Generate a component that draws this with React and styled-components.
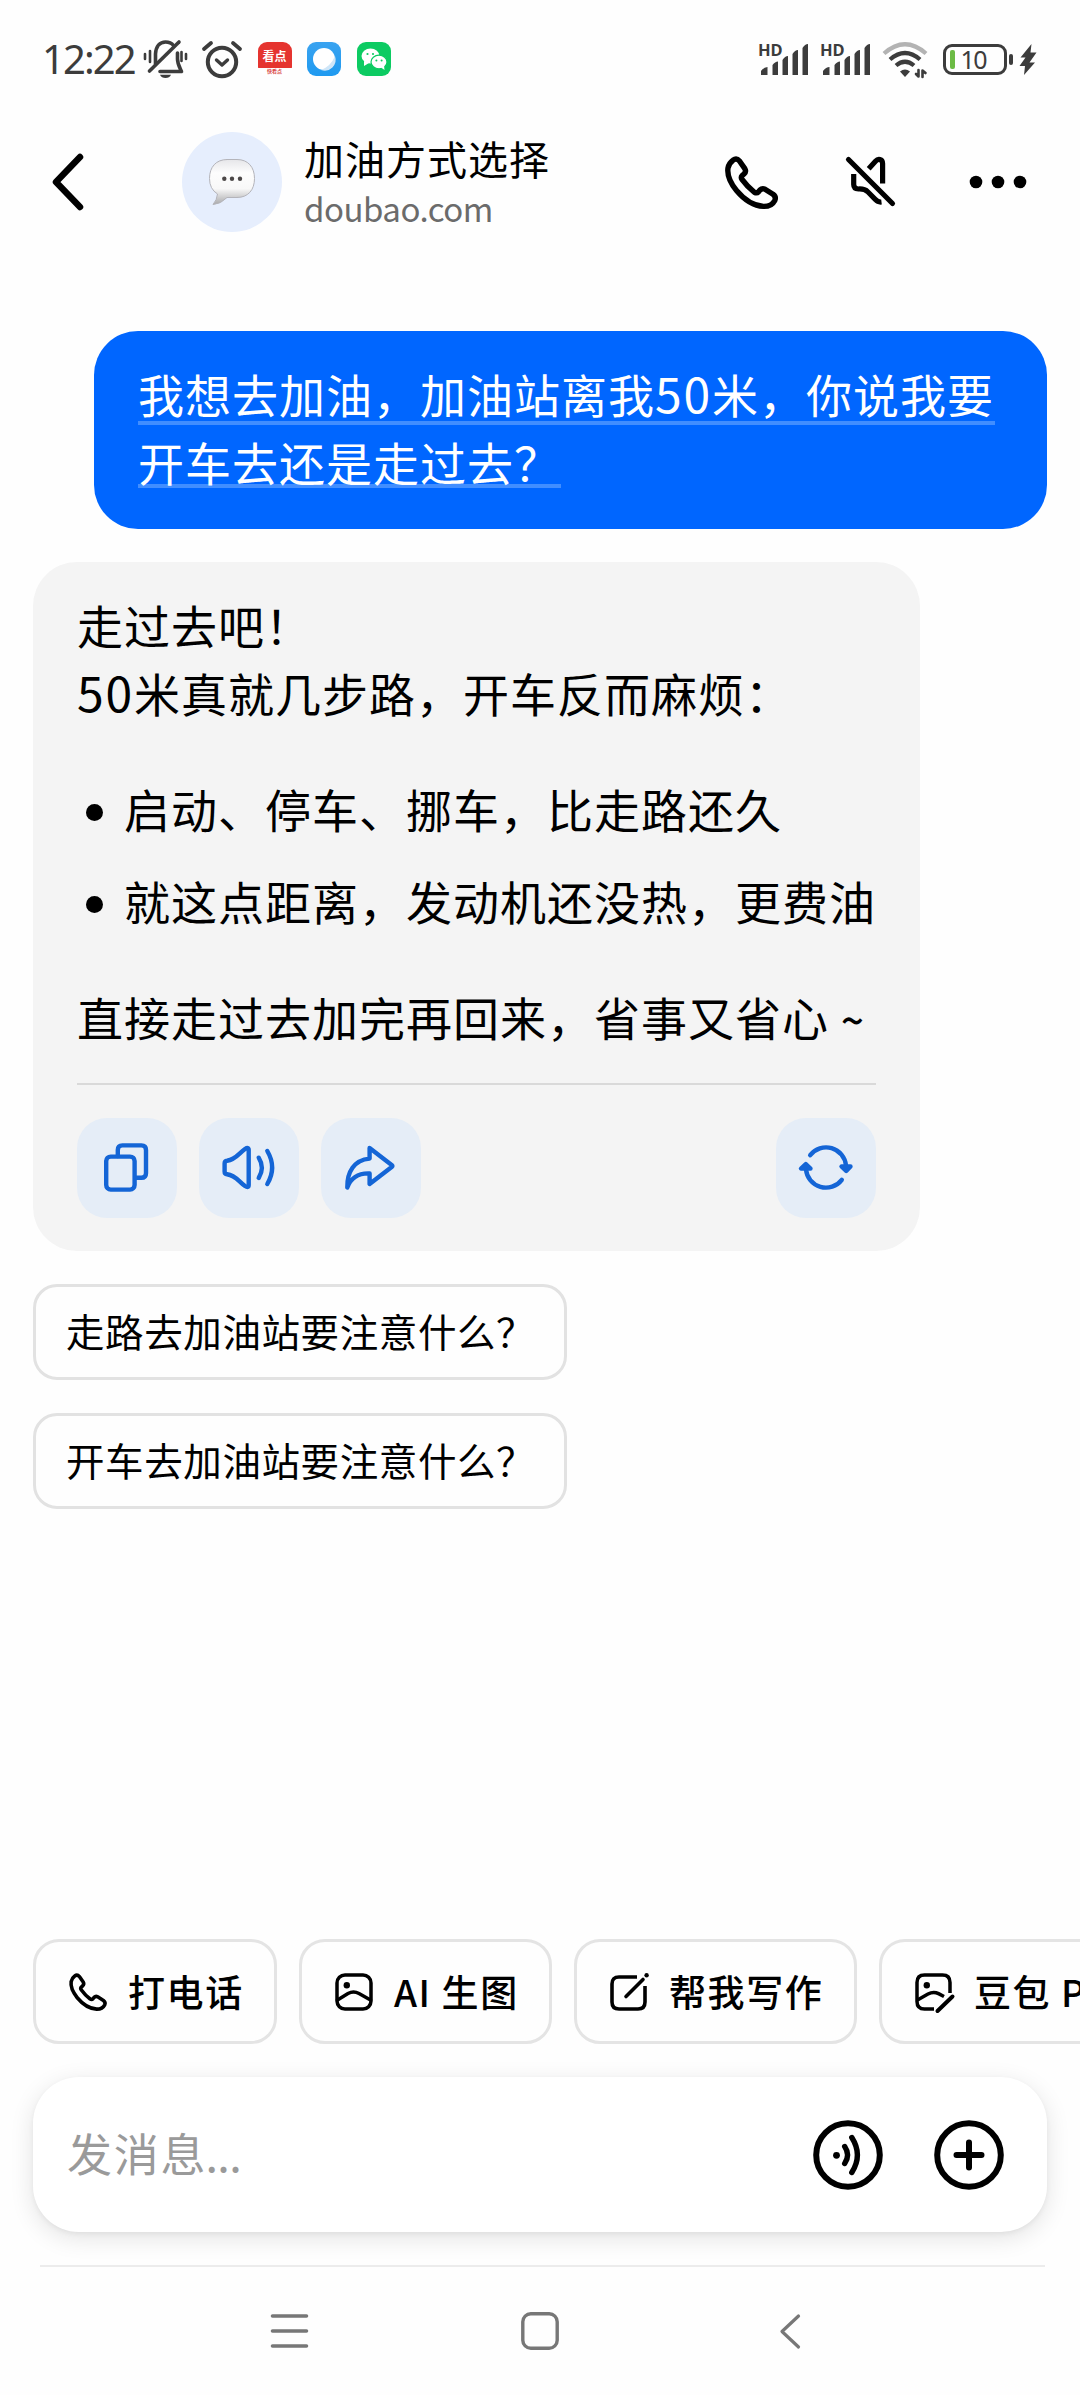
import React from 'react';
import styled, {createGlobalStyle} from "styled-components";

const GlobalStyle = createGlobalStyle`
  * {
    box-sizing: border-box;
  }
  body {
    margin: 0;
    background: #fefefe;
    color: #000;
    font-family: "Noto Sans CJK SC", "Noto Sans", sans-serif;
  }
  svg {
    display: block;
    flex-shrink: 0;
    overflow: visible;
  }
`
const Page = styled.div`
  width: 1080px;
  height: 2395px;
  display: flex;
  flex-direction: column;
  overflow: hidden;
`

/* status bar */
const StatusBar = styled.div`
  height: 118px;
  padding: 0 43px 0 42px;
  display: flex;
  align-items: center;
  justify-content: space-between;
  color: #3c3c3c;
`
const StatusGroup = styled.div`
  display: flex;
  align-items: center;
  gap: ${props => props.$gap};
`
const Clock = styled.div`
  width: 85px;
  font-family: "Noto Sans", sans-serif;
  font-size: 40px;
  line-height: 50px;
  letter-spacing: -1.9px;
  white-space: nowrap;
`
const AppIcon = styled.div`
  width: 34px;
  height: 34px;
  border-radius: 9px;
  overflow: hidden;
  display: flex;
  flex-direction: column;
  align-items: center;
  justify-content: ${props => props.$top ? "flex-start" : "center"};
  background: ${props => props.$bg};
`
const NewsLabel = styled.div`
  width: 34px;
  height: 26px;
  line-height: 27px;
  font-size: 12px;
  font-weight: 700;
  text-align: center;
  color: #fff;
  background: #e5342f;
`
const NewsFoot = styled.div`
  height: 8px;
  line-height: 6px;
  font-size: 5px;
  font-weight: 700;
  color: #d8443f;
`
const Battery = styled.div`
  display: flex;
  align-items: center;
  gap: 2px;
  margin: 0 -5px 0 3px;
`
const BatteryBody = styled.div`
  width: 64px;
  height: 31px;
  border: 3px solid #3c3c3c;
  border-radius: 9px;
  display: flex;
  align-items: center;
  padding-left: 4px;
  font-family: "Noto Sans", sans-serif;
  font-size: 25px;
  letter-spacing: -1.6px;
  line-height: 25px;
`
const BatteryLevel = styled.div`
  width: 5px;
  height: 19px;
  margin-right: 6px;
  border-radius: 2px;
  background: #6cbb45;
`
const BatteryTip = styled.div`
  width: 4px;
  height: 11px;
  border-radius: 2px;
  background: #3c3c3c;
`

/* header */
const Header = styled.div`
  height: 128px;
  padding: 0 54px 0 52px;
  display: flex;
  align-items: center;
`
const Avatar = styled.div`
  width: 100px;
  height: 100px;
  margin-left: 98px;
  border-radius: 50%;
  background: #e6eefd;
  display: flex;
  align-items: center;
  justify-content: center;
`
const Heading = styled.div`
  flex: 1;
  margin: 3px 0 0 22px;
`
const Title = styled.div`
  font-size: 40px;
  line-height: 49px;
  letter-spacing: 1px;
`
const Subtitle = styled.div`
  font-size: 33px;
  line-height: 51px;
  letter-spacing: -0.5px;
  color: #6b6b6b;
`
const HeaderActions = styled.div`
  display: flex;
  align-items: center;
`
const Action = styled.div`
  margin-right: ${props => props.$right || "0"};
`

/* conversation */
const Chat = styled.div`
  flex: 1;
  padding: 85px 33px 0;
  display: flex;
  flex-direction: column;
  align-items: flex-start;
`
const UserBubble = styled.div`
  align-self: flex-end;
  width: 953px;
  height: 198px;
  padding: 28px 0 0 44px;
  border-radius: 44px;
  background: #0066ff;
  color: #fff;
`
const UserLine = styled.div`
  width: ${props => props.$width};
  height: 68px;
  line-height: 68px;
  font-size: 46px;
  letter-spacing: 1px;
  white-space: nowrap;
  background: linear-gradient(#418eff, #418eff) no-repeat 0 ${props => props.$underline} / 100% 4px;
`
const Digits = styled.span`
  font-size: 48px;
  line-height: 1;
  letter-spacing: 1.8px;
`
const Reply = styled.div`
  width: 887px;
  margin-top: 33px;
  padding: 28px 44px 33px;
  border-radius: 44px;
  background: #f4f4f4;
`
const Paragraph = styled.div`
  height: 68px;
  line-height: 68px;
  font-size: 46px;
  letter-spacing: 1px;
  white-space: nowrap;
`
const Points = styled.div`
  display: flex;
  flex-direction: column;
  gap: 24px;
  margin: 48px 0;
`
const Point = styled(Paragraph)`
  display: flex;
  align-items: center;
  &::before {
    content: "";
    flex: none;
    width: 17px;
    height: 17px;
    margin: 8px 21px 0 9px;
    border-radius: 50%;
    background: #000;
  }
`
const Tilde = styled.span`
  margin-left: 12px;
  font-size: 40px;
  line-height: 1;
  font-weight: 500;
`
const Divider = styled.div`
  height: 2px;
  margin: 33px 0 33px;
  background: #d9d9d9;
`
const ReplyActions = styled.div`
  display: flex;
  gap: 22px;
`
const ReplyButton = styled.div`
  width: 100px;
  height: 100px;
  margin-left: ${props => props.$end ? "auto" : "0"};
  border-radius: 30px;
  background: #e5edf7;
  color: #1465d6;
`
const Suggestion = styled.div`
  width: 534px;
  height: 96px;
  margin-top: 33px;
  padding: 0 0 4px 30px;
  border: 3px solid #e2e2e2;
  border-radius: 24px;
  line-height: 86px;
  font-size: 38.5px;
  letter-spacing: 0.6px;
  white-space: nowrap;
`

/* bottom area */
const Tools = styled.div`
  display: flex;
  gap: 22px;
  padding-left: 33px;
`
const Tool = styled.div`
  flex: none;
  width: ${props => props.$width};
  height: 105px;
  padding: 0 0 0 33px;
  border: 3px solid #e4e4e4;
  border-radius: 26px;
  display: flex;
  align-items: center;
  gap: 21px;
  font-size: 37px;
  font-weight: 500;
  letter-spacing: 1.6px;
  white-space: nowrap;
  span {
    margin-top: -2px;
  }
`
const InputBar = styled.div`
  height: 155px;
  margin: 33px 33px;
  padding: 0 43px 0 34px;
  border-radius: 46px;
  background: #fff;
  box-shadow: 0 6px 24px rgba(0, 0, 0, 0.11), 0 2px 5px rgba(0, 0, 0, 0.05);
  display: flex;
  align-items: center;
  gap: 51px;
`
const Placeholder = styled.div`
  flex: 1;
  margin-top: -5px;
  font-size: 45px;
  letter-spacing: 1.8px;
  color: #9a9a9a;
`
const Dots = styled.span`
  letter-spacing: -0.6px;
  margin-left: -2px;
`
const NavLine = styled.div`
  height: 2px;
  margin: 0 35px 0 40px;
  background: #ececec;
`
const NavBar = styled.div`
  height: 128px;
  padding-left: 270px;
  display: grid;
  grid-template-columns: 251px 258px auto;
  align-items: center;
`

const Icon = ({size, width, height, box, stroke = 4, color = "currentColor", children}) => (
    <svg
        width={width || size}
        height={height || size}
        viewBox={box || `0 0 ${width || size} ${height || size}`}
        fill="none"
        stroke={color}
        strokeWidth={stroke}
        strokeLinecap="round"
        strokeLinejoin="round"
    >
        {children}
    </svg>
)

const PhoneIcon = ({size, stroke}) => (
    <Icon size={size} box="0 0 53 53" stroke={stroke}>
        <path d="M8 4.2Q11.5 1.5 14.5 5L19.8 12.6Q21.6 15.6 19 18L17.2 19.6Q15.6 21.4 17 23.4Q22.5 31 29.5 36.3Q31.8 37.6 33.5 35.8L35 34Q37.2 31.8 40 33.2L48 38.3Q51.4 40.8 49.8 44.4Q46.6 50.6 38.5 50.4Q24 49.5 11.5 34.5Q1.5 22 3 12Q4 7 8 4.2Z"/>
    </Icon>
)

const BellOffIcon = () => (
    <Icon width={44} height={38} stroke={3.6}>
        <path d="M12.5 24V14C13 6 17 2 22.5 2C26 2 28.5 3 30.5 5.5"/>
        <path d="M34.5 13V19C34.5 24 36.5 27 38.5 31.5H17"/>
        <path d="M6.5 31L36 2"/>
        <path d="M2 14V19M7 11V22M38.5 12V21M43 14V19" strokeWidth="2.6"/>
        <path d="M17 34.8H28Q26.5 38 22.5 38T17 34.8Z" fill="currentColor" stroke="none"/>
    </Icon>
)

const AlarmIcon = () => (
    <Icon width={40} height={37} stroke={4}>
        <circle cx="20" cy="21" r="14.2"/>
        <path d="M14.5 19L20 24L25.5 19" strokeWidth="3.4"/>
        <path d="M2 8L9 2M38 8L31 2" strokeWidth="3.8"/>
    </Icon>
)

const WechatIcon = () => (
    <Icon size={34} stroke={0}>
        <ellipse cx="13.5" cy="14" rx="9" ry="7.6" fill="#fff"/>
        <path d="M7 19L7 24L12 21Z" fill="#fff"/>
        <ellipse cx="22" cy="20" rx="8" ry="6.8" fill="#fff" stroke="#0ccb62" strokeWidth="1.2"/>
        <path d="M24 25.5L27.5 28L27 23.5Z" fill="#fff"/>
        <circle cx="10.5" cy="12" r="1.1" fill="#0ccb62"/>
        <circle cx="16" cy="12" r="1.1" fill="#0ccb62"/>
        <circle cx="19.4" cy="18.5" r="1" fill="#0ccb62"/>
        <circle cx="24.6" cy="18.5" r="1" fill="#0ccb62"/>
    </Icon>
)

const SignalText = styled.text`
  font-family: "Noto Sans", sans-serif;
  font-size: 16.5px;
  font-weight: 700;
`

const SignalIcon = () => (
    <Icon width={50} height={33} stroke={0}>
        <SignalText x="-1" y="12.5" fill="currentColor">HD</SignalText>
        <path
            d="M2 32V28Q5 24 8.5 24V32ZM13.5 32V22Q16 18.5 19 18.5V32ZM23.5 32V17Q26 13 29 13V32ZM33.5 32V11Q36 7 39 7V32ZM43.5 32V5Q46 1 49 1V32Z"
            fill="currentColor"
        />
    </Icon>
)

const WifiIcon = () => (
    <Icon width={46} height={35} stroke={4.2}>
        <path d="M2 11.5Q23 -7 44 11.5" stroke="#b3b3b3" strokeLinecap="butt"/>
        <path d="M8 17.5Q23 4.5 38 17.5" strokeLinecap="butt"/>
        <path d="M14 23.5Q23 16 32 23.5" strokeLinecap="butt"/>
        <path d="M18 29.5Q23 25.5 28 29.5L23 35Z" fill="currentColor" stroke="none"/>
        <path d="M36.5 28V34.5L34 32M40.5 35V28.5L43.5 31" strokeWidth="2.6"/>
    </Icon>
)

const BoltIcon = () => (
    <Icon width={18} height={31} stroke={0}>
        <path d="M12.5 0L1.5 13.5H6.5L0.5 22H6L5 31L16 18.5H10.5L17.5 8.5H11.5Z" fill="currentColor"/>
    </Icon>
)

const ChatBubbleIcon = () => (
    <Icon size={46} stroke={1}>
        <defs>
            <linearGradient id="bubble" x1="0" y1="0" x2="0" y2="1">
                <stop offset="0" stopColor="#e6e6e9"/>
                <stop offset="0.3" stopColor="#fdfdfd"/>
                <stop offset="0.65" stopColor="#f8f8f8"/>
                <stop offset="1" stopColor="#a9a9ab"/>
            </linearGradient>
        </defs>
        <path
            d="M18 0.5H28C39 0.5 45.5 8 45.5 19.5S39 38.5 28 38.5H18Q12 45 4 45.5Q8 41 8.5 35Q0.5 30 0.5 19.5C0.5 8 7 0.5 18 0.5Z"
            fill="url(#bubble)"
            stroke="#b4b4ba"
        />
        <circle cx="15.3" cy="19.7" r="2.2" fill="#4c4848" stroke="none"/>
        <circle cx="23" cy="19.7" r="2.2" fill="#4c4848" stroke="none"/>
        <circle cx="31" cy="19.7" r="2.2" fill="#4c4848" stroke="none"/>
    </Icon>
)

const MuteIcon = () => (
    <Icon size={50} stroke={5.2}>
        <path d="M2.5 2.5L46.5 46.5"/>
        <path d="M22.7 11.7L29.5 4.2Q31.5 2 34 2.6T36.6 6.5V26.5" strokeLinecap="butt"/>
        <path d="M7.7 17V27.5Q7.7 31.8 12.5 32Q18.5 31.6 22 35L29.5 42.6Q32 45.4 35.5 45" strokeLinecap="butt"/>
    </Icon>
)

const replyActions = [
    {
        id: "copy",
        icon: <>
            <rect x="29.2" y="38.6" width="28.4" height="33" rx="4.5"/>
            <path d="M40.8 38V32Q40.8 27.4 45.4 27.4H64.4Q69 27.4 69 32V55.2Q69 59.8 64.4 59.8H58.5"/>
        </>
    },
    {
        id: "read",
        icon: <>
            <path d="M25.6 45.5Q25.6 43 28 42.8C37 41.5 39 36 46 31Q49.7 28.5 49.7 32V67Q49.7 70.5 46 68C39 63 37 57.5 28 56.2Q25.6 56 25.6 53.5Z"/>
            <path d="M59.7 39.7Q66 49.8 59.7 60"/>
            <path d="M68.3 33Q78 49.5 68.3 66"/>
        </>
    },
    {
        id: "share",
        icon: <path d="M48.6 30L71 47.2Q71.8 48 71 48.8L48.6 66V55.4C38 55 30 59.5 26.3 69.5C26 54 33 42 48.6 40.6Z"/>
    },
    {
        id: "refresh",
        end: true,
        icon: <>
            <path d="M34.2 37.2A20 20 0 0 1 70 47.5"/>
            <path d="M30 51.5A20 20 0 0 0 65.8 61.8"/>
            <path d="M65.5 48.5H74.5L70.2 53Z" fill="currentColor"/>
            <path d="M25 50.5H34.5L29.8 46Z" fill="currentColor"/>
        </>
    }
]

const suggestions = ["走路去加油站要注意什么？", "开车去加油站要注意什么？"]

const tools = [
    {
        name: "打电话",
        width: "244px",
        icon: <PhoneIcon size={38} stroke={5}/>
    },
    {
        name: "AI 生图",
        width: "253px",
        icon: <Icon size={38} stroke={3.5}>
            <rect x="2" y="2" width="34" height="34" rx="8"/>
            <circle cx="11.8" cy="12.2" r="3.2" fill="currentColor" stroke="none"/>
            <path d="M2.5 27L13 20.6Q18.5 17.5 24 20.6L35.5 27"/>
        </Icon>
    },
    {
        name: "帮我写作",
        width: "283px",
        icon: <Icon size={38} stroke={3.6}>
            <path d="M27 4H9Q2 4 2 11V29Q2 36 9 36H28Q35 36 35 29V13" strokeLinecap="butt"/>
            <path d="M16 23.5L33 6.5"/>
            <circle cx="36.6" cy="2.2" r="2.2" fill="currentColor" stroke="none"/>
        </Icon>
    },
    {
        name: "豆包 P",
        width: "270px",
        icon: <Icon size={38} stroke={3.5}>
            <path d="M35 20V9.5Q35 2 27.5 2H9.5Q2 2 2 9.5V28.5Q2 36 9.5 36H19" strokeLinecap="butt"/>
            <circle cx="11.8" cy="12.2" r="3.2" fill="currentColor" stroke="none"/>
            <path d="M2.5 27L13 21Q18.5 18 23.5 20.6L29 23.5" strokeLinecap="butt"/>
            <path d="M22.5 38L37.5 23.5" strokeWidth="4"/>
        </Icon>
    }
]

const App = () => {
    return (
        <Page lang="zh-CN">
            <GlobalStyle/>
            <StatusBar>
                <StatusGroup $gap="15.5px">
                    <Clock>12:22</Clock>
                    <BellOffIcon/>
                    <AlarmIcon/>
                    <AppIcon $bg="#fff" $top>
                        <NewsLabel>看点</NewsLabel>
                        <NewsFoot>快看点</NewsFoot>
                    </AppIcon>
                    <AppIcon $bg="linear-gradient(#3aa3f0, #1f9af0)">
                        <Icon size={34} stroke={0}>
                            <circle cx="17" cy="17" r="11" fill="#fff"/>
                            <path d="M28 14A11 11 0 0 1 14 28Q24 24 28 14Z" fill="#cfe6f8"/>
                        </Icon>
                    </AppIcon>
                    <AppIcon $bg="#0ccb62">
                        <WechatIcon/>
                    </AppIcon>
                </StatusGroup>
                <StatusGroup $gap="11.5px">
                    <SignalIcon/>
                    <SignalIcon/>
                    <WifiIcon/>
                    <Battery>
                        <BatteryBody>
                            <BatteryLevel/>
                            10
                        </BatteryBody>
                        <BatteryTip/>
                    </Battery>
                    <BoltIcon/>
                </StatusGroup>
            </StatusBar>

            <Header>
                <Icon width={32} height={58} stroke={6.5}>
                    <path d="M28 4L4 29L28 54"/>
                </Icon>
                <Avatar>
                    <ChatBubbleIcon/>
                </Avatar>
                <Heading>
                    <Title>加油方式选择</Title>
                    <Subtitle>doubao.com</Subtitle>
                </Heading>
                <HeaderActions>
                    <Action $right="68px">
                        <PhoneIcon size={53} stroke={5.4}/>
                    </Action>
                    <Action $right="73px">
                        <MuteIcon/>
                    </Action>
                    <Icon width={57} height={14} stroke={0}>
                        <circle cx="7" cy="7" r="6.3" fill="currentColor"/>
                        <circle cx="29" cy="7" r="6.3" fill="currentColor"/>
                        <circle cx="51" cy="7" r="6.3" fill="currentColor"/>
                    </Icon>
                </HeaderActions>
            </Header>

            <Chat>
                <UserBubble>
                    <UserLine $width="857px" $underline="62px">
                        我想去加油，加油站离我<Digits>50</Digits>米，你说我要
                    </UserLine>
                    <UserLine $width="423px" $underline="57px">开车去还是走过去？</UserLine>
                </UserBubble>

                <Reply>
                    <Paragraph>走过去吧！</Paragraph>
                    <Paragraph><Digits>50</Digits>米真就几步路，开车反而麻烦：</Paragraph>
                    <Points>
                        <Point>启动、停车、挪车，比走路还久</Point>
                        <Point>就这点距离，发动机还没热，更费油</Point>
                    </Points>
                    <Paragraph>直接走过去加完再回来，省事又省心<Tilde>~</Tilde></Paragraph>
                    <Divider/>
                    <ReplyActions>
                        {replyActions.map((item) => (
                            <ReplyButton key={item.id} $end={item.end}>
                                <Icon size={100} stroke={4.4}>{item.icon}</Icon>
                            </ReplyButton>
                        ))}
                    </ReplyActions>
                </Reply>

                {suggestions.map((text) => (
                    <Suggestion key={text}>{text}</Suggestion>
                ))}
            </Chat>

            <Tools>
                {tools.map((item) => (
                    <Tool key={item.name} $width={item.width}>
                        {item.icon}
                        <span>{item.name}</span>
                    </Tool>
                ))}
            </Tools>
            <InputBar>
                <Placeholder>发消息<Dots>...</Dots></Placeholder>
                <Icon size={70} stroke={5.4}>
                    <circle cx="35" cy="35" r="31.8" strokeWidth="6"/>
                    <circle cx="23.5" cy="35.3" r="3.4" fill="currentColor" stroke="none"/>
                    <path d="M31.7 26.5Q37.5 35 31.7 43.5"/>
                    <path d="M38.8 17.5Q50 35 38.8 52.5"/>
                </Icon>
                <Icon size={70} stroke={6}>
                    <circle cx="35" cy="35" r="31.8"/>
                    <path d="M35 22.5V47.5M22.5 35H47.5"/>
                </Icon>
            </InputBar>
            <NavLine/>
            <NavBar>
                <Icon width={39} height={34} stroke={3.6} color="#777">
                    <path d="M2.5 2H36.5M2.5 17H36.5M2.5 32H36.5"/>
                </Icon>
                <Icon size={38} stroke={3.4} color="#777">
                    <rect x="1.8" y="1.8" width="34.4" height="34.4" rx="8"/>
                </Icon>
                <Icon width={22} height={35} stroke={3.2} color="#777">
                    <path d="M19.5 2L3 17.5L19.5 33"/>
                </Icon>
            </NavBar>
        </Page>
    );
};

export default App;
